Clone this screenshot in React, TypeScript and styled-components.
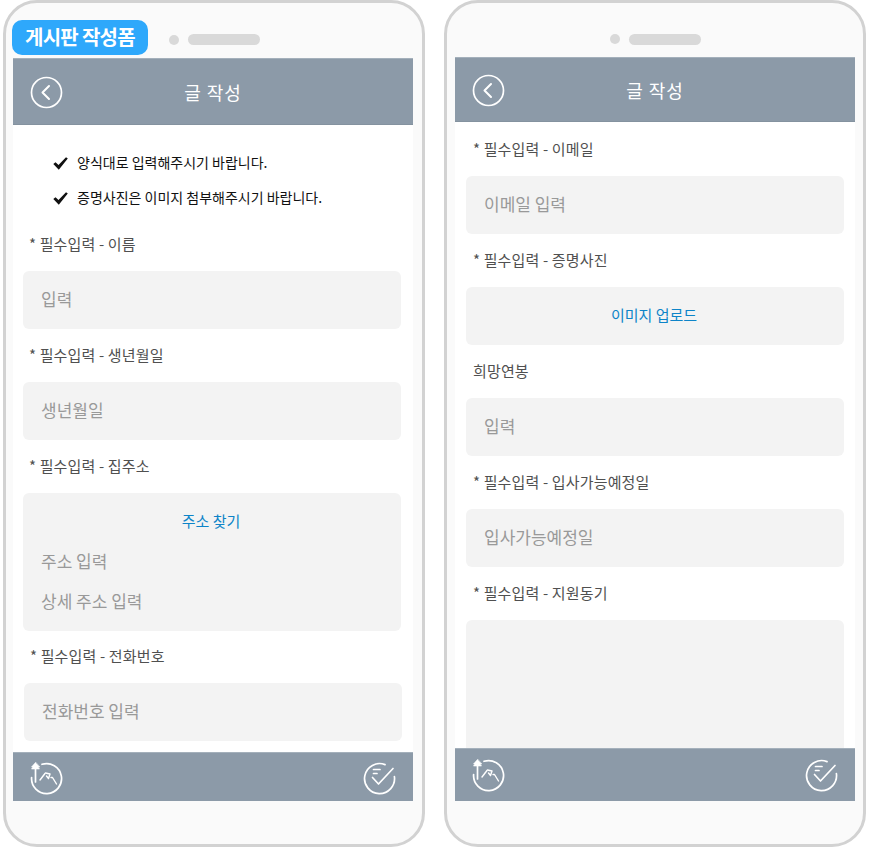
import { FC, ReactNode } from "react";
import styled, { createGlobalStyle } from "styled-components";

const GlobalStyle = createGlobalStyle`
  html, body {
    margin: 0;
    padding: 0;
    background: #ffffff;
    font-family: "Noto Sans CJK KR", "Noto Sans", sans-serif;
  }
`;

const Page = styled.div`
  position: relative;
  display: flex;
  gap: 19px;
  width: 871px;
  height: 848px;
  padding-left: 3px;
  box-sizing: border-box;
`;

const Phone = styled.section<{ $left: number; $right: number }>`
  display: flex;
  flex-direction: column;
  width: 422px;
  height: 847px;
  box-sizing: border-box;
  border: 3px solid #d2d2d2;
  border-radius: 34px;
  background: #fafafa;
  padding: 0 ${({ $right }) => $right}px 43px ${({ $left }) => $left}px;
`;

const Badge = styled.div`
  position: absolute;
  left: 12px;
  top: 20px;
  display: flex;
  align-items: center;
  justify-content: center;
  width: 136px;
  height: 35px;
  padding-bottom: 2px;
  box-sizing: border-box;
  border-radius: 10px;
  background: #2ea8fb;
  color: #ffffff;
  font-size: 20px;
  font-weight: 700;
  letter-spacing: -0.7px;
`;

const TopBar = styled.div<{ $height: number; $nudge: number }>`
  display: flex;
  align-items: center;
  justify-content: center;
  gap: 9px;
  height: ${({ $height }) => $height}px;
  flex-shrink: 0;
  padding: 18px 0 0 ${({ $nudge }) => $nudge}px;
  box-sizing: border-box;
`;

const Camera = styled.span`
  width: 10px;
  height: 10px;
  border-radius: 50%;
  background: #d9d9d9;
`;

const Speaker = styled.span`
  width: 72px;
  height: 11px;
  border-radius: 6px;
  background: #d9d9d9;
`;

const Header = styled.header<{ $height: number }>`
  display: grid;
  grid-template-columns: 33px 1fr 33px;
  align-items: center;
  flex-shrink: 0;
  height: ${({ $height }) => $height}px;
  padding: 2px 17px 0;
  box-sizing: border-box;
  background: #8c9aa8;
  border-top: 1px solid #a4b0bb;
  border-bottom: 1px solid #84929f;
`;

const Title = styled.h1`
  margin: 0;
  padding-bottom: 1px;
  text-align: center;
  color: #ffffff;
  font-size: 18px;
  font-weight: 400;
  letter-spacing: 1px;
`;

const Body = styled.main<{ $left: number; $right: number; $top: number }>`
  display: flex;
  flex-direction: column;
  flex: 1;
  min-height: 0;
  overflow: hidden;
  background: #ffffff;
  padding: ${({ $top }) => $top}px ${({ $right }) => $right}px 0 ${({ $left }) => $left}px;
`;

const Notes = styled.ul`
  list-style: none;
  margin: 0 0 2px;
  padding: 0 0 0 30px;
`;

const Note = styled.li`
  display: flex;
  align-items: center;
  gap: 9px;
  height: 35px;
  color: #111111;
  font-size: 14px;
`;

const NoteText = styled.span`
  padding-bottom: 3px;
`;

const Label = styled.div<{ $indent?: number; $height?: number }>`
  display: flex;
  align-items: center;
  flex-shrink: 0;
  height: ${({ $height }) => $height ?? 53}px;
  padding: 0 0 3px ${({ $indent }) => $indent ?? 6}px;
  box-sizing: border-box;
  color: #505050;
  font-size: 15px;
  letter-spacing: 0.15px;
`;

const FieldBox = styled.div<{ $shift?: number }>`
  display: flex;
  flex-direction: column;
  flex-shrink: 0;
  margin-left: ${({ $shift }) => $shift ?? 0}px;
  margin-right: ${({ $shift }) => -($shift ?? 0)}px;
  border-radius: 6px;
  background: #f3f3f3;
`;

const AddressBox = styled(FieldBox)`
  padding: 9px 0;
`;

const TextInput = styled.input<{ $height?: number }>`
  display: block;
  width: 100%;
  height: ${({ $height }) => $height ?? 58}px;
  box-sizing: border-box;
  padding: 0 18px 4px;
  border: 0;
  outline: 0;
  background: transparent;
  color: #333333;
  font-family: inherit;
  font-size: 17px;

  &::placeholder {
    color: #999999;
    opacity: 1;
  }
`;

const LinkButton = styled.button<{ $height?: number }>`
  display: block;
  width: 100%;
  height: ${({ $height }) => $height ?? 58}px;
  padding: 0 2px 4px 0;
  border: 0;
  background: transparent;
  color: #0d84c8;
  font-family: inherit;
  font-size: 15px;
`;

const MessageBox = styled.textarea`
  display: block;
  flex: 1;
  min-height: 0;
  margin-bottom: -6px;
  border: 0;
  outline: 0;
  resize: none;
  border-radius: 6px;
  background: #f3f3f3;
`;

const Footer = styled.footer<{ $height: number; $offset: number }>`
  display: flex;
  align-items: center;
  justify-content: space-between;
  flex-shrink: 0;
  height: ${({ $height }) => $height}px;
  padding: ${({ $offset }) => $offset}px 17px 0;
  box-sizing: border-box;
  background: #8c9aa8;
  border-top: 1px solid #a4b0bb;
`;

const IconButton = styled.button`
  display: block;
  width: 33px;
  height: 33px;
  padding: 0;
  border: 0;
  background: transparent;
`;

const IconSvg = styled.svg`
  display: block;
  fill: none;
  stroke: #ffffff;
  stroke-width: 1.7;
  stroke-linecap: round;
  stroke-linejoin: round;
`;

const BackIcon: FC = () => (
  <IconSvg width="33" height="33" viewBox="0 0 33 33">
    <circle cx="16.5" cy="16.5" r="15" />
    <path d="M19 10 L12.5 16.5 L19 23" strokeWidth="2" />
  </IconSvg>
);

const UploadIcon: FC = () => (
  <IconSvg width="33" height="33" viewBox="0 0 33 33">
    <path d="M12 2.3 A15 15 0 1 1 1.6 15.5" />
    <path d="M5.5 20 V6" />
    <path d="M5.5 0.5 L1.5 5 H3 L1.5 7 H9.5 L8 5 H9.5 Z" fill="#ffffff" strokeWidth="0.6" />
    <path d="M10 18 L15 11.5" strokeWidth="1.4" />
    <path d="M15.5 11 L20 12 L18.5 16.5 L16.5 14" strokeWidth="1.4" />
    <path d="M21 15.5 L22.5 15.5 L26.5 22" strokeWidth="1.4" />
  </IconSvg>
);

const ConfirmIcon: FC = () => (
  <IconSvg width="33" height="33" viewBox="0 0 33 33">
    <path d="M22 2.6 A15 15 0 1 0 31.4 14.5" />
    <path d="M9.5 15.5 L15.5 22 L30 6.5" />
    <path d="M10.5 7.5 H17" />
    <path d="M10.5 11.5 H14" />
  </IconSvg>
);

const CheckMark: FC = () => (
  <svg width="15" height="13" viewBox="0 0 15 13">
    <path d="M0.3 7 L2.5 5.2 L5.5 8 L13 0.3 L14.8 1.5 L5.8 12.8 Z" fill="#111111" />
  </svg>
);

const PhoneChrome: FC<{
  side: { left: number; right: number };
  top: number;
  nudge: number;
  headerHeight: number;
  footerHeight: number;
  footerOffset: number;
  body: { left: number; right: number; top: number };
  children: ReactNode;
}> = ({ side, top, nudge, headerHeight, footerHeight, footerOffset, body, children }) => (
  <Phone $left={side.left} $right={side.right}>
    <TopBar $height={top} $nudge={nudge}>
      <Camera />
      <Speaker />
    </TopBar>
    <Header $height={headerHeight}>
      <IconButton>
        <BackIcon />
      </IconButton>
      <Title>글 작성</Title>
    </Header>
    <Body $left={body.left} $right={body.right} $top={body.top}>
      {children}
    </Body>
    <Footer $height={footerHeight} $offset={footerOffset}>
      <IconButton>
        <UploadIcon />
      </IconButton>
      <IconButton>
        <ConfirmIcon />
      </IconButton>
    </Footer>
  </Phone>
);

const App: FC = () => (
  <Page>
    <GlobalStyle />
    <PhoneChrome
      side={{ left: 7, right: 9 }}
      top={55}
      nudge={3}
      headerHeight={67}
      footerHeight={49}
      footerOffset={2}
      body={{ left: 10, right: 12, top: 21 }}
    >
      <Notes>
        <Note>
          <CheckMark />
          <NoteText>양식대로 입력해주시기 바랍니다.</NoteText>
        </Note>
        <Note>
          <CheckMark />
          <NoteText>증명사진은 이미지 첨부해주시기 바랍니다.</NoteText>
        </Note>
      </Notes>
      <Label>* 필수입력 - 이름</Label>
      <FieldBox>
        <TextInput readOnly placeholder="입력" />
      </FieldBox>
      <Label>* 필수입력 - 생년월일</Label>
      <FieldBox>
        <TextInput readOnly placeholder="생년월일" />
      </FieldBox>
      <Label>* 필수입력 - 집주소</Label>
      <AddressBox>
        <LinkButton $height={40}>주소 찾기</LinkButton>
        <TextInput readOnly $height={40} placeholder="주소 입력" />
        <TextInput readOnly $height={40} placeholder="상세 주소 입력" />
      </AddressBox>
      <Label $indent={7} $height={52}>* 필수입력 - 전화번호</Label>
      <FieldBox $shift={1}>
        <TextInput readOnly placeholder="전화번호 입력" />
      </FieldBox>
    </PhoneChrome>
    <PhoneChrome
      side={{ left: 8, right: 8 }}
      top={54}
      nudge={1}
      headerHeight={65}
      footerHeight={53}
      footerOffset={0}
      body={{ left: 11, right: 11, top: 1 }}
    >
      <Label $indent={7}>* 필수입력 - 이메일</Label>
      <FieldBox>
        <TextInput readOnly placeholder="이메일 입력" />
      </FieldBox>
      <Label $indent={7}>* 필수입력 - 증명사진</Label>
      <FieldBox>
        <LinkButton>이미지 업로드</LinkButton>
      </FieldBox>
      <Label $indent={7}>희망연봉</Label>
      <FieldBox>
        <TextInput readOnly placeholder="입력" />
      </FieldBox>
      <Label $indent={7}>* 필수입력 - 입사가능예정일</Label>
      <FieldBox>
        <TextInput readOnly placeholder="입사가능예정일" />
      </FieldBox>
      <Label $indent={7}>* 필수입력 - 지원동기</Label>
      <MessageBox readOnly />
    </PhoneChrome>
    <Badge>게시판 작성폼</Badge>
  </Page>
);

export default App;
